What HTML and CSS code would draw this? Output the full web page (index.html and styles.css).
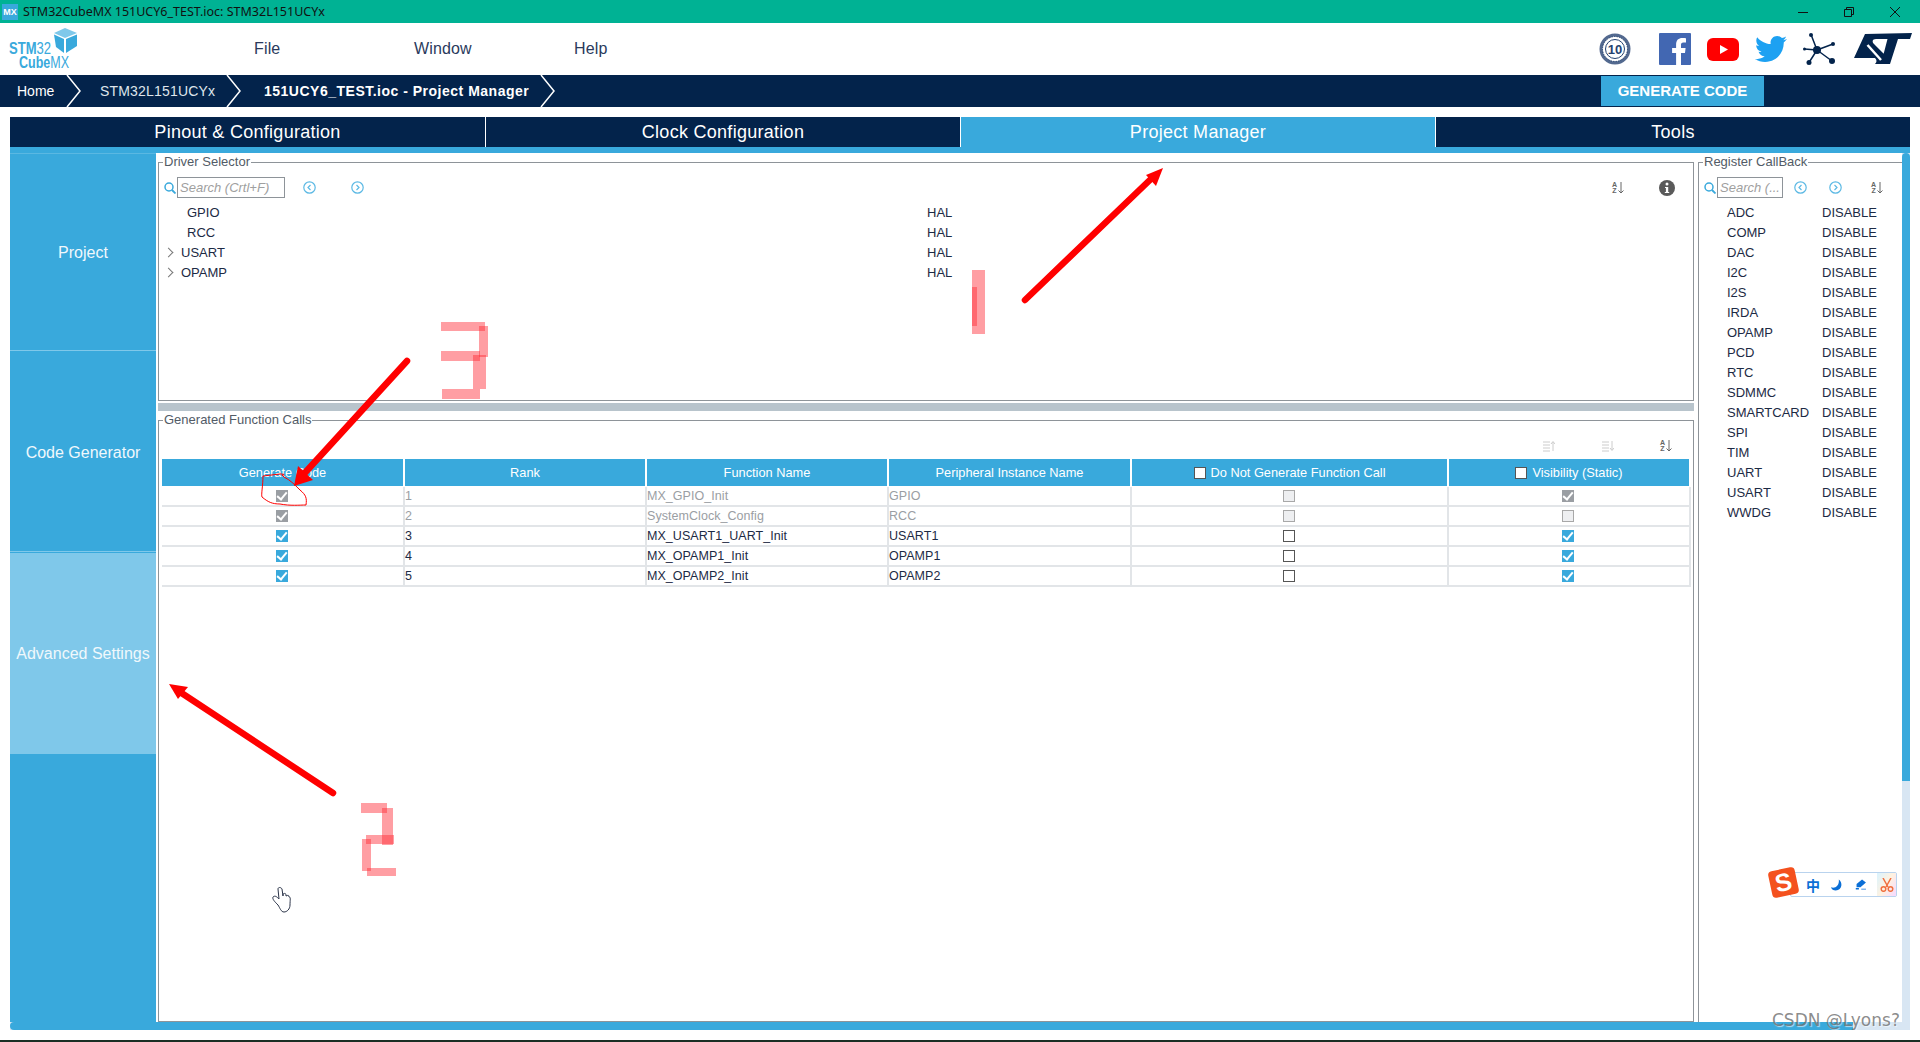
FILE: index.html
```html
<!DOCTYPE html>
<html lang="en">
<head>
    <meta charset="UTF-8">
    <title>STM32CubeMX 151UCY6_TEST.ioc: STM32L151UCYx</title>
    <link rel="stylesheet" href="styles.css">
</head>
<body>
<div class="app">

    <!-- window title -->
    <div class="titlebar">
        <span class="app-icon">MX</span>
        <span class="title-text">STM32CubeMX 151UCY6_TEST.ioc: STM32L151UCYx</span>
        <div class="win-btns">
            <svg width="10" height="10" viewBox="0 0 10 10"><path d="M0 5.500H10" stroke="#111" fill="none"/></svg>
            <svg width="10" height="10" viewBox="0 0 10 10"><path d="M.5 2.500h7v7h-7zM2.500 2.500V.5h7v7h-2" stroke="#111" fill="none"/></svg>
            <svg width="10" height="10" viewBox="0 0 10 10"><path d="M0 0L10 10M10 0L0 10" stroke="#111" fill="none"/></svg>
        </div>
    </div>

    <!-- logo, menu and social icons -->
    <div class="menubar">
        <svg class="logo" width="72" height="44" viewBox="0 0 72 44">
            <text class="logo-stm" x="0" y="27" textLength="42" lengthAdjust="spacingAndGlyphs">STM<tspan class="logo-thin">32</tspan></text>
            <text class="logo-stm" x="10" y="41" textLength="50" lengthAdjust="spacingAndGlyphs">Cube<tspan class="logo-thin">MX</tspan></text>
            <path d="M56 1L68 6L56 11L45 6Z" fill="#7fc8ea"/>
            <path d="M45 7.500L55 12V26L47 20Z" fill="#39a9dc"/>
            <path d="M57 12L68 7.500V19L57 26Z" fill="#39a9dc"/>
        </svg>
        <nav class="menu">
            <span>File</span>
            <span>Window</span>
            <span>Help</span>
        </nav>
        <div class="social">
            <svg class="badge" width="32" height="32" viewBox="0 0 32 32">
                <circle cx="16" cy="16" r="15.500" fill="#53698f"/>
                <circle cx="16" cy="16" r="12.500" fill="#fff" stroke="#24426f" stroke-dasharray="1.500 1"/>
                <circle cx="16" cy="16" r="9.500" fill="#fff" stroke="#24426f"/>
                <text x="16" y="20.500" class="badge-num">10</text>
            </svg>
            <svg class="fb" width="32" height="32" viewBox="0 0 32 32">
                <rect width="32" height="32" rx="1" fill="#4267b2"/>
                <path d="M22 32V20h4l.6-5H22v-3c0-1.400.5-2.400 2.400-2.400H27V5.200C26.500 5.200 25 5 23.300 5c-3.700 0-6.200 2.200-6.200 6.400V15h-4v5h4v12z" fill="#fff"/>
            </svg>
            <svg class="yt" width="32" height="23" viewBox="0 0 32 23">
                <rect width="32" height="23" rx="6" fill="#f00"/>
                <path d="M13 7L21 11.500L13 16Z" fill="#fff"/>
            </svg>
            <svg class="tw" width="32" height="32" viewBox="0 0 24 24">
                <path d="M23.954 4.569c-.885.389-1.83.654-2.825.775 1.014-.611 1.794-1.574 2.163-2.723-.951.555-2.005.959-3.127 1.184-.896-.959-2.173-1.559-3.591-1.559-2.717 0-4.92 2.203-4.92 4.917 0 .39.045.765.127 1.124C7.691 8.094 4.066 6.13 1.64 3.161c-.427.722-.666 1.561-.666 2.475 0 1.71.87 3.213 2.188 4.096-.807-.026-1.566-.248-2.228-.616v.061c0 2.385 1.693 4.374 3.946 4.827-.413.111-.849.171-1.296.171-.314 0-.615-.03-.916-.086.631 1.953 2.445 3.377 4.604 3.417-1.68 1.319-3.809 2.105-6.102 2.105-.39 0-.779-.023-1.17-.067 2.189 1.394 4.768 2.209 7.557 2.209 9.054 0 13.999-7.496 13.999-13.986 0-.209 0-.42-.015-.63.961-.689 1.8-1.56 2.46-2.548l-.047-.02z" fill="#1da1f2"/>
            </svg>
            <svg class="net" width="32" height="32" viewBox="0 0 32 32">
                <path d="M14 17L8 1.500M14 17L30 11M14 17L1.500 16M14 17L6 29.500M14 17L29 28" stroke="#03234b" stroke-width="1.500" fill="none"/>
                <circle cx="14" cy="17" r="4" fill="#03234b"/>
                <circle cx="8" cy="2" r="2" fill="#03234b"/>
                <circle cx="30" cy="11" r="2" fill="#03234b"/>
                <circle cx="1.500" cy="16" r="1.500" fill="#03234b"/>
                <circle cx="6" cy="29.500" r="2.500" fill="#03234b"/>
                <circle cx="29" cy="28" r="3" fill="#03234b"/>
            </svg>
            <svg class="st" width="58" height="32" viewBox="0 0 58 32">
                <path d="M11 1L58 0L56 6H44L36 31H27L33.500 6H22C18 6 18 9 20 11L31 22C35 27 31 31 26 31H21C23 29 23 27 21 25H0Z" fill="#03234b"/>
                <path d="M13.500 12L27 27" stroke="#fff" stroke-width="2.500" fill="none"/>
            </svg>
        </div>
    </div>

    <!-- breadcrumb -->
    <div class="crumbs">
        <span class="crumb c-home">Home</span>
        <svg class="chev" width="15" height="32" viewBox="0 0 15 32"><path d="M1 0L14 16L1 32" stroke="#fff" stroke-width="1.500" fill="none"/></svg>
        <span class="crumb c-mcu">STM32L151UCYx</span>
        <svg class="chev" width="15" height="32" viewBox="0 0 15 32"><path d="M1 0L14 16L1 32" stroke="#fff" stroke-width="1.500" fill="none"/></svg>
        <span class="crumb c-file">151UCY6_TEST.ioc - Project Manager</span>
        <svg class="chev" width="15" height="32" viewBox="0 0 15 32"><path d="M1 0L14 16L1 32" stroke="#fff" stroke-width="1.500" fill="none"/></svg>
        <button class="gen-btn">GENERATE CODE</button>
    </div>

    <div class="tabs">
        <div class="tab">Pinout &amp; Configuration</div>
        <div class="tab">Clock Configuration</div>
        <div class="tab active">Project Manager</div>
        <div class="tab">Tools</div>
    </div>

    <div class="main">
        <div class="sidebar">
            <div class="side-item s-project">Project</div>
            <div class="side-item s-code">Code Generator</div>
            <div class="side-item s-adv">Advanced Settings</div>
        </div>

        <div class="center">
            <fieldset class="box driver-box">
                <legend>Driver Selector</legend>
                <div class="toolbar">
                    <svg class="search-ic" width="12" height="12" viewBox="0 0 12 12"><circle cx="5" cy="5" r="4" fill="none" stroke="#39a9dc" stroke-width="1.500"/><path d="M8 8L11.500 11.500" stroke="#39a9dc" stroke-width="1.800"/></svg>
                    <input class="search search-wide" placeholder="Search (Crtl+F)">
                    <svg class="nav-ic first" width="13" height="13" viewBox="0 0 13 13"><circle cx="6.500" cy="6.500" r="5.700" fill="none" stroke="#5cb9e4" stroke-width="1.200"/><path d="M7.500 4L5 6.500L7.500 9" fill="none" stroke="#5cb9e4" stroke-width="1.200"/></svg>
                    <svg class="nav-ic second" width="13" height="13" viewBox="0 0 13 13"><circle cx="6.500" cy="6.500" r="5.700" fill="none" stroke="#5cb9e4" stroke-width="1.200"/><path d="M5.500 4L8 6.500L5.500 9" fill="none" stroke="#5cb9e4" stroke-width="1.200"/></svg>
                    <span class="spacer"></span>
                    <span class="az">A<br>Z</span>
                    <svg class="az-arrow" width="6" height="12" viewBox="0 0 6 12"><path d="M3 0V11M.5 8.500L3 11L5.500 8.500" fill="none" stroke="#666"/></svg>
                    <svg class="info" width="16" height="16" viewBox="0 0 16 16"><circle cx="8" cy="8" r="8" fill="#5a5a5a"/><circle cx="8" cy="4" r="1.500" fill="#fff"/><path d="M6 7H9.200V12H10.200V13H5.800V12H6.900V8H6Z" fill="#fff"/></svg>
                </div>
                <div class="tree">
                    <div class="tree-row"><span class="tree-name leaf">GPIO</span><span>HAL</span></div>
                    <div class="tree-row"><span class="tree-name leaf">RCC</span><span>HAL</span></div>
                    <div class="tree-row"><span class="tree-name"><i class="arrow"></i>USART</span><span>HAL</span></div>
                    <div class="tree-row"><span class="tree-name"><i class="arrow"></i>OPAMP</span><span>HAL</span></div>
                </div>
            </fieldset>

            <div class="divider"></div>

            <fieldset class="box calls-box">
                <legend class="calls-legend">Generated Function Calls</legend>
                <div class="sort-bar">
                    <svg class="s-up" width="12" height="12" viewBox="0 0 12 12"><path d="M0 2H7M0 5H7M0 8H7M0 11H7M10 11V2M8 4L10 1.500L12 4" fill="none" stroke="#ccc"/></svg>
                    <svg class="s-down" width="12" height="12" viewBox="0 0 12 12"><path d="M0 2H7M0 5H7M0 8H7M0 11H7M10 1V10M8 8L10 10.500L12 8" fill="none" stroke="#ccc"/></svg>
                    <span class="az">A<br>Z</span>
                    <svg class="az-arrow" width="6" height="12" viewBox="0 0 6 12"><path d="M3 0V11M.5 8.500L3 11L5.500 8.500" fill="none" stroke="#666"/></svg>
                </div>
                <div class="calls">
                    <div class="row head">
                        <div>Generate Code</div>
                        <div>Rank</div>
                        <div>Function Name</div>
                        <div>Peripheral Instance Name</div>
                        <div><span class="cb head-cb"></span>Do Not Generate Function Call</div>
                        <div><span class="cb head-cb"></span>Visibility (Static)</div>
                    </div>
                    <div class="row off">
                        <div class="mid"><span class="cb grey-on"></span></div>
                        <div>1</div>
                        <div>MX_GPIO_Init</div>
                        <div>GPIO</div>
                        <div class="mid"><span class="cb grey-off"></span></div>
                        <div class="mid"><span class="cb grey-on"></span></div>
                    </div>
                    <div class="row off">
                        <div class="mid"><span class="cb grey-on"></span></div>
                        <div>2</div>
                        <div>SystemClock_Config</div>
                        <div>RCC</div>
                        <div class="mid"><span class="cb grey-off"></span></div>
                        <div class="mid"><span class="cb grey-off"></span></div>
                    </div>
                    <div class="row">
                        <div class="mid"><span class="cb blue-on"></span></div>
                        <div>3</div>
                        <div>MX_USART1_UART_Init</div>
                        <div>USART1</div>
                        <div class="mid"><span class="cb"></span></div>
                        <div class="mid"><span class="cb blue-on"></span></div>
                    </div>
                    <div class="row">
                        <div class="mid"><span class="cb blue-on"></span></div>
                        <div>4</div>
                        <div>MX_OPAMP1_Init</div>
                        <div>OPAMP1</div>
                        <div class="mid"><span class="cb"></span></div>
                        <div class="mid"><span class="cb blue-on"></span></div>
                    </div>
                    <div class="row">
                        <div class="mid"><span class="cb blue-on"></span></div>
                        <div>5</div>
                        <div>MX_OPAMP2_Init</div>
                        <div>OPAMP2</div>
                        <div class="mid"><span class="cb"></span></div>
                        <div class="mid"><span class="cb blue-on"></span></div>
                    </div>
                </div>
            </fieldset>
        </div>

        <fieldset class="box reg-box">
            <legend>Register CallBack</legend>
            <div class="toolbar reg-bar">
                <svg class="search-ic" width="12" height="12" viewBox="0 0 12 12"><circle cx="5" cy="5" r="4" fill="none" stroke="#39a9dc" stroke-width="1.500"/><path d="M8 8L11.500 11.500" stroke="#39a9dc" stroke-width="1.800"/></svg>
                <input class="search search-small" placeholder="Search (...">
                <svg class="nav-ic r-first" width="13" height="13" viewBox="0 0 13 13"><circle cx="6.500" cy="6.500" r="5.700" fill="none" stroke="#5cb9e4" stroke-width="1.200"/><path d="M7.500 4L5 6.500L7.500 9" fill="none" stroke="#5cb9e4" stroke-width="1.200"/></svg>
                <svg class="nav-ic r-second" width="13" height="13" viewBox="0 0 13 13"><circle cx="6.500" cy="6.500" r="5.700" fill="none" stroke="#5cb9e4" stroke-width="1.200"/><path d="M5.500 4L8 6.500L5.500 9" fill="none" stroke="#5cb9e4" stroke-width="1.200"/></svg>
                <span class="az r-az">A<br>Z</span>
                <svg class="az-arrow" width="6" height="12" viewBox="0 0 6 12"><path d="M3 0V11M.5 8.500L3 11L5.500 8.500" fill="none" stroke="#666"/></svg>
            </div>
            <div class="reg-list">
                <div class="reg-row"><span>ADC</span><span>DISABLE</span></div>
                <div class="reg-row"><span>COMP</span><span>DISABLE</span></div>
                <div class="reg-row"><span>DAC</span><span>DISABLE</span></div>
                <div class="reg-row"><span>I2C</span><span>DISABLE</span></div>
                <div class="reg-row"><span>I2S</span><span>DISABLE</span></div>
                <div class="reg-row"><span>IRDA</span><span>DISABLE</span></div>
                <div class="reg-row"><span>OPAMP</span><span>DISABLE</span></div>
                <div class="reg-row"><span>PCD</span><span>DISABLE</span></div>
                <div class="reg-row"><span>RTC</span><span>DISABLE</span></div>
                <div class="reg-row"><span>SDMMC</span><span>DISABLE</span></div>
                <div class="reg-row"><span>SMARTCARD</span><span>DISABLE</span></div>
                <div class="reg-row"><span>SPI</span><span>DISABLE</span></div>
                <div class="reg-row"><span>TIM</span><span>DISABLE</span></div>
                <div class="reg-row"><span>UART</span><span>DISABLE</span></div>
                <div class="reg-row"><span>USART</span><span>DISABLE</span></div>
                <div class="reg-row"><span>WWDG</span><span>DISABLE</span></div>
            </div>
        </fieldset>

        <div class="vscroll"><div class="vthumb"></div></div>
    </div>

    <div class="hscroll"><div class="hthumb"></div></div>
    <div class="foot-gap"></div>
    <div class="taskbar"></div>
</div>

<!-- hand drawn marks on top of the screenshot -->
<svg class="marks" width="1920" height="1042" viewBox="0 0 1920 1042">
    <g class="pink">
        <rect x="972" y="270" width="13" height="64"/>
        <rect x="972" y="287" width="5" height="39"/>
        <rect x="441" y="322" width="44" height="9"/>
        <rect x="441" y="351" width="39" height="10"/>
        <rect x="442" y="389" width="38" height="10"/>
        <rect x="479" y="326" width="9" height="31"/>
        <rect x="473" y="355" width="13" height="34"/>
        <rect x="361" y="803" width="26" height="10"/>
        <rect x="382" y="808" width="11" height="37"/>
        <rect x="366" y="835" width="28" height="9"/>
        <rect x="362" y="839" width="9" height="32"/>
        <rect x="367" y="868" width="29" height="8"/>
    </g>
    <g class="arrow-line">
        <path d="M1025 300L1153 177"/>
        <path d="M407 361L302 476"/>
        <path d="M333 793L180 692"/>
    </g>
    <path class="arrow-head" d="M1163 168L1146 175L1156 186Z"/>
    <path class="arrow-head" d="M294 486L298 466L313 480Z"/>
    <path class="arrow-head" d="M169 684L188 687L178 699Z"/>
    <path class="scribble" d="M263 476C263 485 261 495 262 497C268 502 272 504 280 504C290 506 300 505 306 505C307 498 306 495 300 490C294 484 290 480 284 477L282 475C286 475 284 474 280 474L263 476Z"/>
    <path class="hand" d="M278 905C275 902 272 899 273 897C275 895 277 897 279 899L278 889C278 887 281 887 282 889L283 896L283 894C285 893 286 893 286 896C288 895 289 895 289 897C291 897 290 900 290 905C290 909 287 912 284 912C281 912 280 908 278 905Z"/>
</svg>

<!-- input method toolbar -->
<div class="ime">
    <span class="ime-logo">S</span>
    <span class="ime-cn">中</span>
    <svg width="16" height="16" viewBox="0 0 16 16"><path d="M10 1C15 4 15 15 6 15C3 15 1 14 0 11C5 13 11 9 10 1Z" fill="#0b6fd6"/></svg>
    <svg width="15" height="15" viewBox="0 0 15 15"><path d="M9 1L14 5L7 11H2V7ZM1 12H5V14H1ZM8 13H14V14H8Z" fill="#0b6fd6"/></svg>
    <span class="ime-cut"><svg width="14" height="14" viewBox="0 0 14 14"><path d="M3 0L8 9M11 0L6 9" stroke="#f07040" stroke-width="1.500" fill="none"/><circle cx="3.500" cy="11" r="2.300" stroke="#f07040" stroke-width="1.500" fill="none"/><circle cx="10.500" cy="11" r="2.300" stroke="#f07040" stroke-width="1.500" fill="none"/></svg></span>
</div>
<div class="watermark">CSDN @Lyons?</div>

</body>
</html>
```

FILE: styles.css
```css
* {
    box-sizing: border-box;
}
html, body {
    margin: 0;
    height: 100%;
    overflow: hidden;
}
body {
    font-family: "Liberation Sans", Arial, sans-serif;
    font-size: 12px;
    color: #1c2a44;
    background: #fff;
    position: relative;
}
.app {
    display: flex;
    flex-direction: column;
    height: 1042px;
}

/* title bar */
.titlebar {
    height: 23px;
    flex: none;
    background: #00b294;
    display: flex;
    align-items: center;
    color: #111;
}
.app-icon {
    width: 16px;
    height: 16px;
    margin: 0 5px 0 2px;
    background: #39a9dc;
    color: #fff;
    font-size: 9px;
    font-weight: bold;
    text-align: center;
    line-height: 16px;
}
.title-text {
    font-family: "Noto Sans", sans-serif;
    font-size: 12.500px;
}
.win-btns {
    margin-left: auto;
    margin-right: 20px;
    display: flex;
    gap: 36px;
}

/* menu bar */
.menubar {
    height: 52px;
    flex: none;
    display: flex;
    align-items: center;
    position: relative;
}
.logo {
    margin-left: 9px;
    flex: none;
}
.logo-stm {
    font-family: "Liberation Sans", sans-serif;
    font-size: 16px;
    font-weight: bold;
    fill: #39a9dc;
}
.logo-thin {
    font-weight: normal;
}
.menu {
    margin-left: 173px;
    display: flex;
    font-size: 16px;
    letter-spacing: .15px;
    color: #2a3a5c;
}
.menu span:nth-child(1) { width: 160px; }
.menu span:nth-child(2) { width: 160px; }
.social {
    margin-left: auto;
    margin-right: 8px;
    display: flex;
    align-items: center;
}
.social svg {
    display: block;
}
.fb { margin-left: 28px; }
.yt { margin-left: 16px; }
.tw { margin-left: 16px; }
.net { margin-left: 16px; }
.st { margin-left: 19px; }
.badge-num {
    font-size: 13px;
    font-weight: bold;
    text-anchor: middle;
    fill: #24426f;
}

/* breadcrumb */
.crumbs {
    height: 32px;
    flex: none;
    background: #03234b;
    color: #fff;
    display: flex;
    align-items: center;
    font-size: 14px;
}
.crumb {
    white-space: nowrap;
}
.c-home { margin-left: 17px; width: 49px; }
.c-mcu { margin-left: 19px; width: 126px; color: #dfe5ec; letter-spacing: .18px; }
.c-file { margin-left: 23px; width: 276px; font-weight: bold; letter-spacing: .5px; }
.chev {
    flex: none;
}
.gen-btn {
    margin-left: auto;
    margin-right: 156px;
    width: 163px;
    height: 30px;
    margin-top: -1px;
    background: #39a9dc;
    color: #fff;
    border: none;
    font-family: inherit;
    font-size: 15px;
    font-weight: bold;
}

/* tabs */
.tabs {
    height: 30px;
    flex: none;
    margin: 10px 10px 0;
    display: grid;
    grid-template-columns: repeat(4, 1fr);
    background: #03234b;
}
.tab {
    color: #fff;
    font-size: 18px;
    letter-spacing: .28px;
    padding-top: 1px;
    display: flex;
    align-items: center;
    justify-content: center;
    border-left: 1px solid #fff;
}
.tab:first-child {
    border-left: none;
}
.tab.active {
    background: #39a9dc;
}

/* main area */
.main {
    height: 875px;
    flex: none;
    margin: 0 10px;
    border-top: 6px solid #39a9dc;
    display: flex;
    overflow: hidden;
}
.sidebar {
    width: 146px;
    flex: none;
    background: #39a9dc;
    color: #f0f8fc;
    font-size: 16px;
}
.side-item {
    display: flex;
    align-items: center;
    justify-content: center;
    white-space: nowrap;
}
.s-project {
    height: 198px;
    padding-top: 2px;
    border-top: 1px solid #5ab8e2;
    border-bottom: 1px solid #7fc8ea;
}
.s-code {
    height: 201px;
    padding-top: 3px;
    border-bottom: 1px solid #7fc8ea;
}
.s-adv {
    height: 201px;
    margin-top: 1px;
    background: #7fc8ea;
}
.center {
    width: 1536px;
    margin-left: 2px;
    flex: none;
    display: flex;
    flex-direction: column;
}
.box {
    margin: 0;
    padding: 0;
    min-width: 0;
    border: 1px solid #8e9499;
}
.box legend {
    margin-left: 4px;
    padding: 0 1px;
    height: 14px;
    line-height: 14px;
    font-size: 13px;
    color: #525b66;
}
.driver-box {
    height: 246px;
    margin-top: 2px;
    flex: none;
}
.divider {
    height: 8px;
    margin-top: 2px;
    flex: none;
    background: #b8c4cc;
}
.calls-box {
    flex: 1;
    margin-top: 2px;
}
.calls-legend {
    padding-right: 6px;
}
.toolbar {
    display: flex;
    align-items: center;
    height: 21px;
    margin-top: 8px;
    padding-left: 5px;
}
.search-ic {
    flex: none;
}
.search {
    height: 21px;
    margin-left: 1px;
    padding: 0 2px;
    border: 1px solid #8e9499;
    border-radius: 0;
    outline: none;
    font-family: inherit;
    font-size: 13px;
    font-style: italic;
    min-width: 0;
}
.search::placeholder {
    color: #a0a0a0;
}
.search-wide { width: 108px; }
.search-small { width: 66px; }
.first { margin-left: 18px; }
.second { margin-left: 35px; }
.spacer { flex: 1; }
.az {
    font-size: 7px;
    line-height: 6px;
    font-weight: bold;
    color: #666;
    text-align: center;
}
.az-arrow {
    margin-left: 1px;
}
.info {
    margin-left: 35px;
    margin-right: 18px;
}
.tree {
    margin-top: 4px;
    font-size: 13px;
}
.tree-row {
    height: 20px;
    display: flex;
    align-items: center;
}
.tree-name {
    width: 768px;
    display: flex;
    align-items: center;
    padding-left: 7px;
    flex: none;
}
.tree-name.leaf {
    padding-left: 28px;
}
.arrow {
    width: 7px;
    height: 7px;
    margin-left: -1px;
    margin-right: 9px;
    border-top: 1px solid #777;
    border-right: 1px solid #777;
    transform: rotate(45deg);
}

/* function call table */
.sort-bar {
    height: 32px;
    display: flex;
    align-items: center;
    padding-top: 6px;
    padding-right: 21px;
    justify-content: flex-end;
}
.s-down {
    margin-left: 47px;
}
.sort-bar .az {
    margin-left: 46px;
}
.calls {
    margin-left: 3px;
    width: 1529px;
    font-size: 12.500px;
    letter-spacing: .05px;
}
.row {
    display: grid;
    grid-template-columns: 243px 242px 242px 243px 317px 242px;
    height: 20px;
}
.row > div {
    display: flex;
    align-items: center;
    border-right: 2px solid #e2e5e8;
    border-bottom: 2px solid #e2e5e8;
    white-space: nowrap;
}
.row.off {
    color: #9a9ea3;
}
.row .mid {
    justify-content: center;
    padding-right: 2px;
}
.row.head {
    height: 27px;
    margin-bottom: 1px;
    font-size: 12.800px;
    letter-spacing: 0;
}
.row.head > div {
    background: #39a9dc;
    color: #fff;
    justify-content: center;
    border-right: 2px solid #fff;
    border-bottom: none;
}
.cb {
    width: 12px;
    height: 12px;
    border: 1px solid #555;
    background: #fff;
    display: flex;
    align-items: center;
    justify-content: center;
}
.cb.head-cb {
    margin-right: 5px;
}
.cb.grey-off {
    border-color: #a8a8a8;
    background: #eeeff1;
}
.blue-on, .grey-on {
    border: none;
}
.blue-on { background: #39a9dc; }
.grey-on { background: #9a9ea3; }
.blue-on::after, .grey-on::after {
    content: "";
    width: 4px;
    height: 8px;
    margin-top: -2px;
    border-right: 2px solid #fff;
    border-bottom: 2px solid #fff;
    transform: rotate(40deg);
}

/* register callback */
.reg-box {
    width: 206px;
    margin-left: 4px;
    margin-top: 2px;
    margin-right: -2px;
    flex: none;
    border-bottom: none;
    border-right: none;
}
.reg-bar {
    padding-left: 5px;
}
.r-first { margin-left: 11px; }
.r-second { margin-left: 22px; }
.r-az { margin-left: 29px; }
.reg-list {
    margin-top: 4px;
    font-size: 13px;
}
.reg-row {
    height: 20px;
    display: flex;
    align-items: center;
    padding-left: 28px;
}
.reg-row span:first-child {
    width: 95px;
    flex: none;
}

/* scrollbars */
.vscroll {
    width: 8px;
    margin-left: auto;
    flex: none;
    background: #d8e6f3;
    position: relative;
    z-index: 1;
}
.vthumb {
    height: 628px;
    background: #39a9dc;
    border-radius: 4px 4px 0 0;
}
.hscroll {
    height: 8px;
    flex: none;
    margin: 0 10px;
    background: #d8e6f3;
}
.hthumb {
    width: 1843px;
    height: 8px;
    background: #39a9dc;
    border-radius: 4px 0 0 4px;
}
.foot-gap {
    height: 10px;
    flex: none;
}
.taskbar {
    height: 2px;
    flex: none;
    background: #1a2e24;
}

/* annotations */
.marks {
    position: absolute;
    left: 0;
    top: 0;
    pointer-events: none;
}
.pink rect {
    fill: rgba(255, 40, 50, .45);
}
.arrow-line path {
    stroke: #f00;
    stroke-width: 6.500;
    stroke-linecap: round;
    fill: none;
}
.arrow-head {
    fill: #f00;
}
.scribble {
    fill: none;
    stroke: #f00;
    stroke-width: 1;
}
.hand {
    fill: #fff;
    stroke: #2a3348;
    stroke-width: 1;
}

/* input method bar */
.ime {
    position: absolute;
    left: 1790px;
    top: 872px;
    width: 107px;
    height: 25px;
    background: #fff;
    border: 1px solid #b9d3ee;
    border-radius: 2px;
    display: flex;
    align-items: center;
    padding-left: 15px;
    gap: 11px;
}
.ime-logo {
    position: absolute;
    left: -21px;
    top: -4px;
    width: 27px;
    height: 27px;
    border-radius: 4px;
    background: #f4511e;
    color: #fff;
    font-size: 25px;
    font-weight: bold;
    text-align: center;
    line-height: 27px;
    transform: rotate(-12deg);
}
.ime-cn {
    font-family: "Noto Sans CJK SC", sans-serif;
    font-size: 14px;
    font-weight: bold;
    color: #0b6fd6;
}
.ime-cut {
    margin-left: auto;
    width: 24px;
    height: 23px;
    display: flex;
    align-items: center;
    justify-content: center;
    background: linear-gradient(120deg, #d9f3ff, #fff2e0, #f5d9ff);
}
.watermark {
    position: absolute;
    left: 1772px;
    top: 1010px;
    font-family: "DejaVu Sans", sans-serif;
    font-size: 17px;
    color: rgba(110, 110, 110, .8);
    text-shadow: 1px 1px 1px rgba(255, 255, 255, .6);
    white-space: nowrap;
}
```
